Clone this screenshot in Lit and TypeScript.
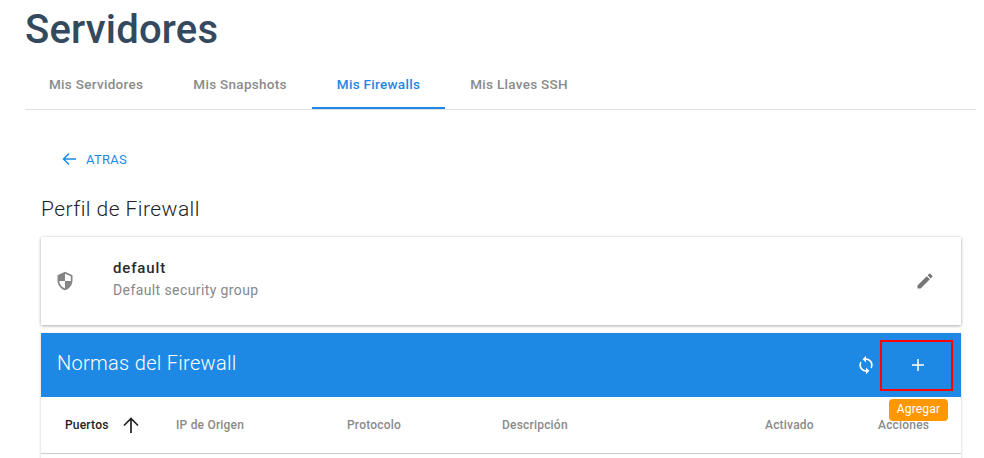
import { LitElement, html, css } from "lit";
import { customElement } from "lit/decorators.js";

@customElement("app-root")
export class AppRoot extends LitElement {
  static styles = css`
    :host { display: block; height: 458px; overflow: hidden; background: #fff; font-family: Roboto, "Liberation Sans", sans-serif; color: rgba(0,0,0,.87); }
    .page { padding: 0 8px 0 25px; }
    h1 { margin: 0; height: 61px; font-size: 40px; font-weight: 500; line-height: 59px; color: #34495e; letter-spacing: .2px; }
    .tabs { display: flex; height: 48px; border-bottom: 1px solid #e0e0e0; }
    .tab { padding: 0 25px; font-size: 13.5px; font-weight: 500; line-height: 47px; color: #8a8a8a; letter-spacing: .3px; white-space: nowrap; box-sizing: border-box; height: 48px; }
    .tab:first-child { margin-left: -1px; }
    .tab.on { color: #1e88e5; border-bottom: 2px solid #1e88e5; }
    .content { padding: 0 15px 0 16px; }
    .back { display: flex; align-items: center; height: 20px; margin: 39px 0 0 21px; color: #1e88e5; font-size: 13px; letter-spacing: .3px; gap: 10px; }
    .back svg { width: 14px; height: 14px; }
    h2 { margin: 30px 0 0; font-size: 21px; font-weight: 300; line-height: 20px; letter-spacing: .45px; color: #222; height: 28px; padding-bottom: 10px; }
    .card { display: flex; align-items: center; height: 88px; background: #fff; box-shadow: 0 1px 3px rgba(0,0,0,.3), 0 0 3px rgba(0,0,0,.08); padding: 0 26px 0 14px; box-sizing: border-box; }
    .shield { width: 20px; height: 20px; flex: none; }
    .info { flex: 1; margin-left: 38px; padding-bottom: 6px; }
    .name { font-size: 15px; font-weight: 500; line-height: 22px; letter-spacing: .85px; color: #2a2a2a; }
    .desc { font-size: 14px; line-height: 20px; color: #888; letter-spacing: .4px; margin-top: 1px; }
    .edit { width: 20px; height: 20px; flex: none; }
    .panel { margin-top: 8px; position: relative; box-shadow: 0 1px 3px rgba(0,0,0,.2); }
    .bar { display: flex; align-items: center; height: 64px; background: #1e88e5; color: #fff; padding: 0 8px 0 16px; box-sizing: border-box; }
    .bar .title { flex: 1; font-size: 20px; font-weight: 300; letter-spacing: .3px; padding-bottom: 4px; }
    .sync { width: 20px; height: 20px; margin-right: 0; }
    .add { width: 73px; height: 51px; box-sizing: border-box; border: 2px solid #f00; display: flex; align-items: center; justify-content: center; margin: 0 0 -1px 4px; padding: 0 0 2px 3px; }
    .add svg { width: 12px; height: 12px; }
    .head { display: grid; grid-template-columns: 135px 171px 155px 263px 113px 83px; height: 57px; align-items: center; background: #fff; border-bottom: 1px solid #ccc; box-sizing: border-box; font-size: 12px; font-weight: 500; color: #8a8a8a; letter-spacing: .2px; }
    .head > div:first-child { padding-left: 24px; color: #222; display: flex; align-items: center; gap: 13px; }
    .head svg { width: 18px; height: 18px; }
    .rest { height: 40px; background: #fff; }
    .tip { position: absolute; left: 848px; top: 66px; width: 59px; height: 22px; border-radius: 4px; background: #ff9800; color: #fff; font-size: 12px; line-height: 20px; text-align: center; letter-spacing: .2px; }
  `;

  render() {
    return html`<div class="page">
      <h1>Servidores</h1>
      <div class="tabs">
        <div class="tab">Mis Servidores</div>
        <div class="tab">Mis Snapshots</div>
        <div class="tab on">Mis Firewalls</div>
        <div class="tab">Mis Llaves SSH</div>
      </div>
      <div class="content">
        <div class="back">
          <svg viewBox="0 0 14 14"><path d="M7 1.5 1.5 7 7 12.5M1.5 7H14" fill="none" stroke="#1e88e5" stroke-width="1.5"/></svg>
          <span>ATRAS</span>
        </div>
        <h2>Perfil de Firewall</h2>
        <div class="card">
          <svg class="shield" viewBox="0 0 24 24"><path transform="matrix(-1 0 0 1 24 0)" fill="#858585" d="M12 1 3 5v6c0 5.55 3.84 10.74 9 12 5.16-1.26 9-6.45 9-12V5l-9-4zm0 10.99h7c-.53 4.12-3.28 7.79-7 8.94V12H5V6.3l7-3.11v8.8z"/></svg>
          <div class="info">
            <div class="name">default</div>
            <div class="desc">Default security group</div>
          </div>
          <svg class="edit" viewBox="0 0 24 24"><path fill="#757575" d="M3 17.25V21h3.75L17.81 9.94l-3.75-3.75L3 17.25zM20.71 7.04a1 1 0 0 0 0-1.41l-2.34-2.34a1 1 0 0 0-1.41 0l-1.83 1.83 3.75 3.75 1.83-1.83z"/></svg>
        </div>
        <div class="panel">
          <div class="bar">
            <div class="title">Normas del Firewall</div>
            <svg class="sync" viewBox="0 0 24 24"><path fill="#fff" d="M12 4V1L8 5l4 4V6c3.31 0 6 2.69 6 6 0 1.01-.25 1.97-.7 2.8l1.46 1.46A7.93 7.93 0 0 0 20 12c0-4.42-3.58-8-8-8zm0 14c-3.31 0-6-2.69-6-6 0-1.01.25-1.97.7-2.8L5.24 7.74A7.93 7.93 0 0 0 4 12c0 4.42 3.58 8 8 8v3l4-4-4-4v3z"/></svg>
            <div class="add"><svg viewBox="0 0 12 12"><path d="M6 0v12M0 6h12" stroke="#fff" stroke-width="1.5"/></svg></div>
          </div>
          <div class="head">
            <div>Puertos <svg viewBox="0 0 18 18"><path d="M2 9.5 9 2.5l7 7M9 2.5V17" fill="none" stroke="#222" stroke-width="1.7"/></svg></div>
            <div>IP de Origen</div>
            <div>Protocolo</div>
            <div>Descripción</div>
            <div>Activado</div>
            <div>Acciones</div>
          </div>
          <div class="rest"></div>
          <div class="tip">Agregar</div>
        </div>
      </div>
    </div>`;
  }
}
